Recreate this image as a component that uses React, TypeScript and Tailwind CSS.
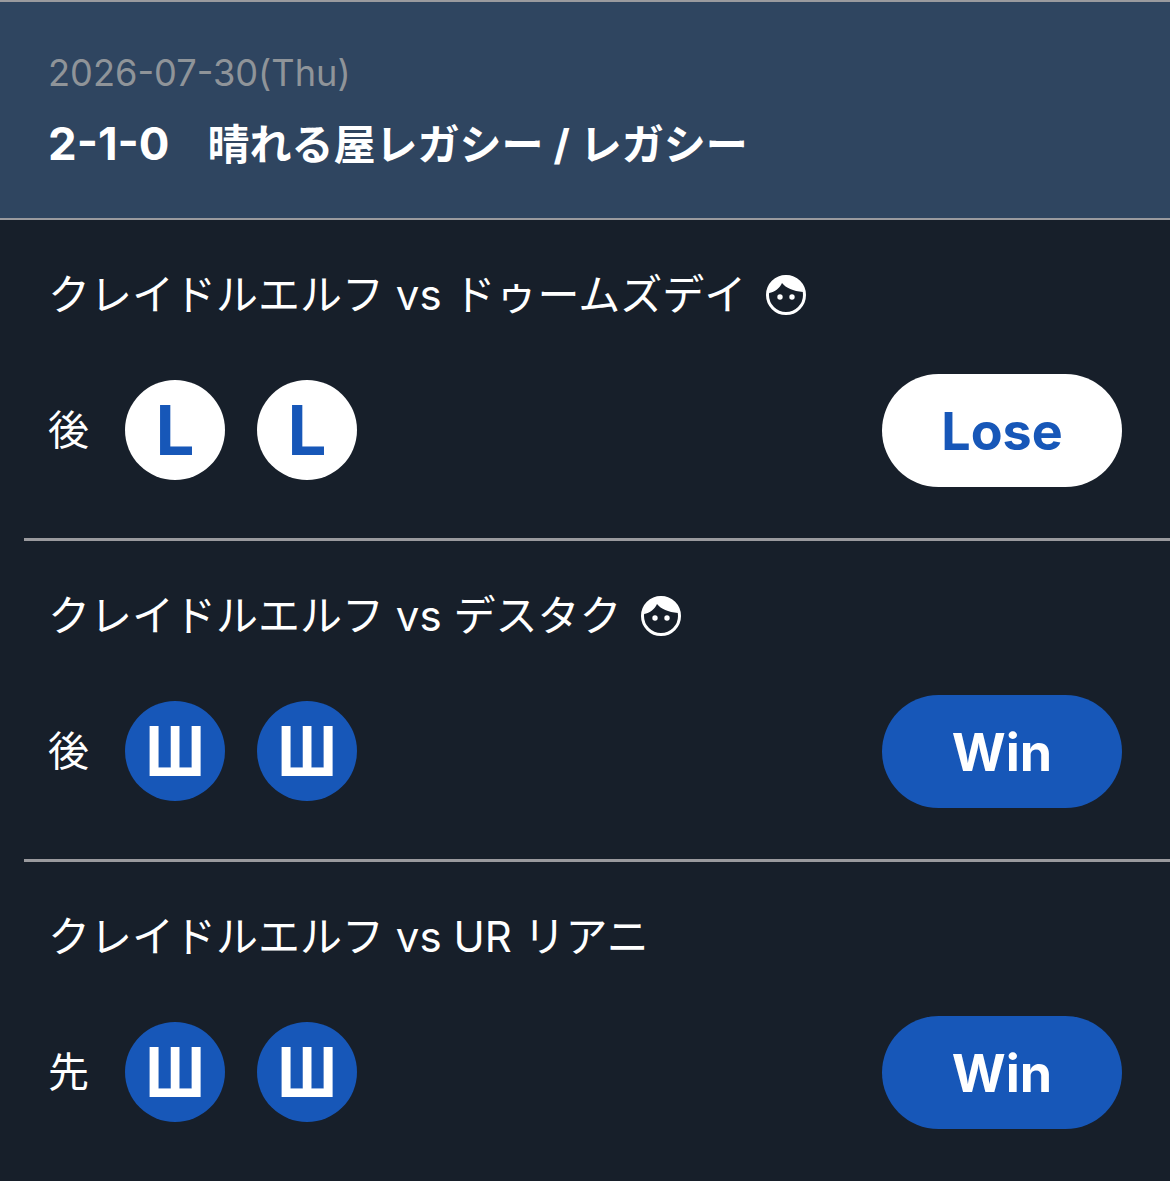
const sans = "font-['Inter','Noto_Sans_CJK_JP',sans-serif]";

function Face() {
  return (
    <svg viewBox="0 0 40 40" className="ml-[20px] h-[40px] w-[40px] shrink-0">
      <circle cx="20" cy="20" r="18.5" fill="#171f2a" stroke="#fff" strokeWidth="3" />
      <path d="M3 18C9 17 14 13 16 8c4 5 11 8 21 9A17 17 0 0 0 3 18Z" fill="#fff" />
      <circle cx="14" cy="22" r="2.7" fill="#fff" />
      <circle cx="26" cy="22" r="2.7" fill="#fff" />
    </svg>
  );
}

function Mark({ win }: { win: boolean }) {
  return (
    <div
      className={`flex h-[100px] w-[100px] items-center justify-center rounded-full text-[69px] leading-none font-bold ${
        win ? 'bg-[#1757b8] text-white' : 'bg-white text-[#1757b8]'
      }`}
    >
      {win ? <span className="inline-block scale-x-[.86]">Ш</span> : 'L'}
    </div>
  );
}

function Round({ title, face, turn, win, last }: { title: string; face?: boolean; turn: string; win: boolean; last?: boolean }) {
  return (
    <section className={`ml-[24px] pt-[45px] pr-[48px] pl-[24px] ${last ? 'pb-[52px]' : 'border-b-[3px] border-[#9a9a9e] pb-[51px]'}`}>
      <div className="flex h-[60px] items-center text-[42px] leading-[60px] text-white">
        <span className="whitespace-nowrap">{title}</span>
        {face && <Face />}
      </div>
      <div className="mt-[49px] flex h-[113px] items-center">
        <span className="w-[77px] text-[41px] text-white">{turn}</span>
        <div className="mb-[1px] flex gap-[32px]">
          <Mark win={win} />
          <Mark win={win} />
        </div>
        <div
          className={`ml-auto flex h-[113px] w-[240px] items-center justify-center rounded-full pt-[2px] text-[52px] font-bold ${
            win ? 'bg-[#1757b8] text-white' : 'bg-white text-[#1757b8]'
          }`}
        >
          {win ? 'Win' : 'Lose'}
        </div>
      </div>
    </section>
  );
}

export default function App() {
  return (
    <div className={`h-[1181px] overflow-hidden bg-[#171f2a] ${sans}`}>
      <header className="h-[220px] border-y-2 border-[#9a9a9e] bg-[#2f4560] pt-[49px] pl-[48px]">
        <div className="text-[36.2px] leading-[44px] text-[#8f9499]">2026-07-30(Thu)</div>
        <h1 className="mt-[19px] whitespace-nowrap text-[42px] leading-[60px] font-bold text-white">
          <span className="mr-[38px] text-[45.5px]">2-1-0</span>晴れる屋レガシー / レガシー
        </h1>
      </header>
      <Round title="クレイドルエルフ vs ドゥームズデイ" face turn="後" win={false} />
      <Round title="クレイドルエルフ vs デスタク" face turn="後" win />
      <Round title="クレイドルエルフ vs UR リアニ" turn="先" win last />
    </div>
  );
}
